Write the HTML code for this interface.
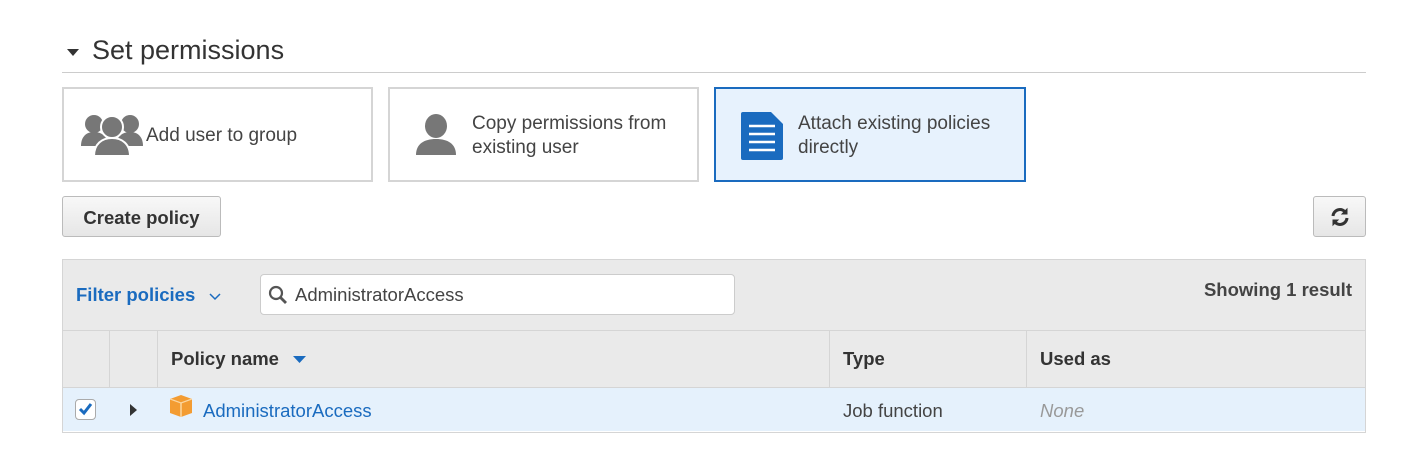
<!DOCTYPE html><html><head><style>
body{margin:0;width:1425px;height:462px;background:#fff;font-family:"Liberation Sans",Arial,sans-serif;position:relative;overflow:hidden;color:#333}
.a{position:absolute}
.card{position:absolute;top:87px;height:91px;border:2px solid #d5d5d5;background:#fff;box-sizing:content-box}
.card span{position:absolute;font-size:19px;line-height:24px;color:#444}
.btn{position:absolute;top:196px;height:39px;border:1px solid #bbb;border-radius:3px;background:linear-gradient(#f8f8f8,#e6e6e6);box-sizing:content-box}
.vl{position:absolute;width:1px;background:#d5d5d5;top:330px;height:57px}
.t{font-size:18.5px}
</style></head><body>
<svg class="a" style="left:67px;top:49px" width="12" height="8"><path d="M0 0H12L6 7Z" fill="#333"/></svg>
<div class="a" style="left:92px;top:35px;font-size:27px;color:#333">Set permissions</div>
<div class="a" style="left:62px;top:72px;width:1304px;height:1px;background:#ccc"></div>

<div class="card" style="left:62px;width:307px">
<svg class="a" style="left:16px;top:25px" width="64" height="42" viewBox="0 0 62 42" fill="#777">
<circle cx="13" cy="10" r="9"/><path d="M0 32c0-9 5-14 13-14s14 5 14 14z"/>
<circle cx="49" cy="10" r="9"/><path d="M35 32c0-9 6-14 14-14s13 5 13 14z"/>
<circle cx="31" cy="13" r="11" stroke="#fff" stroke-width="2"/><path d="M13 42c0-12 8-18 18-18s18 6 18 18z" stroke="#fff" stroke-width="2"/>
</svg>
<span style="left:82px;top:35px">Add user to group</span></div>

<div class="card" style="left:388px;width:307px">
<svg class="a" style="left:24px;top:25px" width="44" height="42" viewBox="0 0 44 42" fill="#777"><ellipse cx="22" cy="12" rx="11" ry="12"/><path d="M2 41c0-11 8-16 20-16s20 5 20 16z"/></svg>
<span style="left:82px;top:23px">Copy permissions from<br>existing user</span></div>

<div class="card" style="left:714px;width:308px;border-color:#1a6bbf;background:#e7f2fd">
<svg class="a" style="left:25px;top:23px" width="42" height="48" viewBox="0 0 42 48"><path d="M2 0H30L42 12V46Q42 48 40 48H2Q0 48 0 46V2Q0 0 2 0Z" fill="#1a6bbf"/><g stroke="#fff" stroke-width="2.5"><path d="M8 14H34M8 22H34M8 30H34M8 38H34"/></g></svg>
<span style="left:82px;top:23px">Attach existing policies<br>directly</span></div>

<div class="btn" style="left:62px;width:157px"><div class="a" style="left:0;right:0;top:10px;text-align:center;font-weight:bold;font-size:18.5px;color:#333">Create policy</div></div>
<div class="btn" style="left:1313px;width:51px">
<svg class="a" style="left:16px;top:10px" width="20" height="20" viewBox="0 0 20 20" fill="none" stroke="#333" stroke-width="3"><path d="M3 9A7 7 0 0 1 16 6"/><path d="M17 11A7 7 0 0 1 4 14"/><path d="M17 2V7H12Z" fill="#333" stroke-width="1"/><path d="M3 18V13H8Z" fill="#333" stroke-width="1"/></svg></div>

<div class="a" style="left:62px;top:259px;width:1302px;height:172px;border:1px solid #d5d5d5;background:#fff"></div>
<div class="a" style="left:63px;top:260px;width:1302px;height:70px;background:#eaeaea;border-bottom:1px solid #d5d5d5"></div>
<div class="a t" style="left:76px;top:284px;font-weight:bold;color:#1a6bbf">Filter policies</div>
<svg class="a" style="left:209px;top:293px" width="12" height="8"><path d="M1 1L6 6L11 1" fill="none" stroke="#1a6bbf" stroke-width="1.5"/></svg>
<div class="a" style="left:260px;top:274px;width:473px;height:39px;border:1px solid #ccc;border-radius:4px;background:#fff"></div>
<svg class="a" style="left:268px;top:285px" width="20" height="20" viewBox="0 0 20 20"><circle cx="8" cy="8" r="6" fill="none" stroke="#555" stroke-width="2.2"/><path d="M12.5 12.5L18 18" stroke="#555" stroke-width="2.8"/></svg>
<div class="a t" style="left:295px;top:284px;color:#444">AdministratorAccess</div>
<div class="a t" style="left:1201px;top:279px;font-weight:bold;color:#444;width:151px;text-align:right;white-space:nowrap">Showing 1 result</div>

<div class="a" style="left:63px;top:331px;width:1302px;height:56px;background:#eaeaea;border-bottom:1px solid #d5d5d5"></div>
<div class="vl" style="left:109px"></div><div class="vl" style="left:157px"></div><div class="vl" style="left:829px"></div><div class="vl" style="left:1026px"></div>
<div class="a t" style="left:171px;top:348px;font-weight:bold;color:#333">Policy name</div>
<svg class="a" style="left:293px;top:356px" width="13" height="8"><path d="M0 0H13L6.5 7Z" fill="#1a6bbf"/></svg>
<div class="a t" style="left:843px;top:348px;font-weight:bold;color:#333">Type</div>
<div class="a t" style="left:1040px;top:348px;font-weight:bold;color:#333">Used as</div>

<div class="a" style="left:63px;top:388px;width:1302px;height:43px;background:#e5f1fc"></div>
<div class="a" style="left:75px;top:399px;width:19px;height:19px;border:1px solid #aaa;border-radius:4px;background:#fff"></div>
<svg class="a" style="left:78px;top:402px" width="15" height="14"><path d="M2 7L6 11L13 2" fill="none" stroke="#1a6bbf" stroke-width="3"/></svg>
<svg class="a" style="left:130px;top:404px" width="8" height="12"><path d="M0 0L7 6L0 12Z" fill="#333"/></svg>
<svg class="a" style="left:170px;top:395px" width="22" height="22" viewBox="0 0 22 22"><path d="M11 0L22 4V18L11 22L0 18V4Z" fill="#f39c32"/><path d="M0 4L11 8L22 4" fill="none" stroke="#fbd6a0" stroke-width="1.2"/><path d="M11 8V22" stroke="#fbd6a0" stroke-width="1.5"/></svg>
<div class="a t" style="left:203px;top:400px;color:#1a6bbf">AdministratorAccess</div>
<div class="a t" style="left:843px;top:400px;color:#444">Job function</div>
<div class="a t" style="left:1040px;top:400px;color:#999;font-style:italic">None</div>
</body></html>
